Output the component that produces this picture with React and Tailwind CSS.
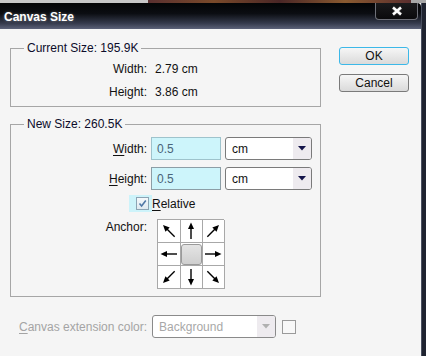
import React from 'react';

const font = { fontFamily: '"Liberation Sans", Arial, sans-serif' };

function Arrow({ angle }) {
  return (
    <svg width="22" height="22" viewBox="0 0 22 22">
      <g transform={`rotate(${angle} 11 11)`}>
        <line x1="11" y1="19" x2="11" y2="7" stroke="#000" strokeWidth="1.4" />
        <polygon points="11,2.5 8,9 14,9" fill="#000" />
      </g>
    </svg>
  );
}

function DropArrow({ color }) {
  return (
    <svg width="8" height="5" viewBox="0 0 8 5">
      <polygon points="0,0 8,0 4,4.5" fill={color} />
    </svg>
  );
}

function Select({ value, disabled, w }) {
  return (
    <div className={`${w} h-[23px] flex items-stretch rounded-[3px] border ${disabled ? 'border-[#8a8a8a]' : 'border-[#7a7a7a]'} bg-white overflow-hidden`}>
      <div className={`flex-1 flex items-center pl-[6px] ${disabled ? 'text-[#a8a8a8]' : 'text-[#111]'}`}>{value}</div>
      <div className="w-[18px] flex items-center justify-center bg-[#eeebef]">
        <DropArrow color={disabled ? '#b0b0b0' : '#14144a'} />
      </div>
    </div>
  );
}

export default function App() {
  const arrows = [-45, 0, 45, -90, null, 90, -135, 180, 135];

  return (
    <div className="w-[426px] h-[356px] overflow-hidden flex flex-col bg-[#f5f5f5] text-[12px] leading-[16px]" style={font}>
      <div className="h-[3px] flex">
        <div className="w-[148px] bg-[#c6c6c6]" />
        <div className="w-[263px] bg-[linear-gradient(to_right,#5a3030,#7a4a2a,#4a2626,#8a5a30,#5a2e2e)]" />
        <div className="flex-1 bg-[#a8a8a8]" />
      </div>
      <div className="flex flex-1">
        <div className="w-[421px] flex flex-col">
          <div className="h-[26px] flex items-start bg-[linear-gradient(to_bottom,#030405_0%,#0b0d12_40%,#353a4c_78%,#5c6279_100%)] rounded-tr-[4px]">
            <div className="pl-[4px] pt-[7px] text-white font-bold text-[12px] leading-[14px] [text-shadow:0_0_3px_rgba(255,255,255,0.35)]">Canvas Size</div>
            <div className="ml-auto mr-[3px] w-[43px] h-[17px] flex items-center justify-center rounded-b-[4px] border border-t-0 border-[#6e7078] bg-[linear-gradient(to_bottom,#1a1a1c,#0a0a0c)]">
              <svg width="12" height="10" viewBox="0 0 12 10">
                <path d="M2 1.5 L10 8.5 M10 1.5 L2 8.5" stroke="#3a3a3a" strokeWidth="4" />
                <path d="M2 1.5 L10 8.5 M10 1.5 L2 8.5" stroke="#fff" strokeWidth="2.4" />
              </svg>
            </div>
          </div>
          <div className="flex-1 flex flex-col">
            <div className="flex">
              <div className="pl-[10px] w-[321px] flex flex-col">
                <fieldset className="mt-[12px] border border-[#a6a6a6] pt-[6px] pb-[6px]">
                  <legend className="ml-[13px] px-[3px] leading-[14px] text-[#0c0c2a]">Current Size: 195.9K</legend>
                  <div className="grid grid-cols-[136px_auto] gap-x-[8px] gap-y-[7px] text-[#111]">
                    <div className="text-right">Width:</div>
                    <div>2.79 cm</div>
                    <div className="text-right">Height:</div>
                    <div>3.86 cm</div>
                  </div>
                </fieldset>
                <fieldset className="mt-[10px] border border-[#a6a6a6] pt-[6px] pb-[7px]">
                  <legend className="ml-[13px] px-[3px] leading-[14px] text-[#0c0c2a]">New Size: 260.5K</legend>
                  <div className="grid grid-cols-[136px_auto] gap-x-[4px] gap-y-[7px] items-center text-[#111]">
                    <div className="text-right"><u className="underline-offset-2">W</u>idth:</div>
                    <div className="flex gap-[4px]">
                      <div className="w-[70px] h-[23px] flex items-center pl-[5px] bg-[#cdf5fb] border border-[#9ec3cc] text-[#4a6478]">0.5</div>
                      <Select value="cm" w="w-[87px]" />
                    </div>
                    <div className="text-right"><u className="underline-offset-2">H</u>eight:</div>
                    <div className="flex gap-[4px]">
                      <div className="w-[70px] h-[23px] flex items-center pl-[5px] bg-[#cdf5fb] border border-[#8c9ea6] text-[#4a6478]">0.5</div>
                      <Select value="cm" w="w-[87px]" />
                    </div>
                  </div>
                  <div className="mt-[5px] pl-[118px] flex items-center h-[17px]">
                    <div className="w-[23px] h-[17px] bg-[#cdf3fa] flex items-center pl-[7px]">
                      <div className="w-[13px] h-[13px] border border-[#8ca4b4] bg-[linear-gradient(to_bottom,#f4f8fb,#dfe9f0)] flex items-center justify-center">
                        <svg width="9" height="9" viewBox="0 0 9 9">
                          <path d="M1.5 4.5 L3.6 7 L7.8 1.5" stroke="#5078a6" strokeWidth="1.6" fill="none" />
                        </svg>
                      </div>
                    </div>
                    <div className="text-[#111]"><u className="underline-offset-2">R</u>elative</div>
                  </div>
                  <div className="mt-[7px] flex items-start">
                    <div className="w-[136px] text-right text-[#111] pt-[-1px]">Anchor:</div>
                    <div className="ml-[10px] grid grid-cols-[repeat(3,22px)] border-l border-t border-[#a8a8a8] bg-white">
                      {arrows.map((a, i) => (
                        <div key={i} className="w-[23px] h-[23px] border-r border-b border-[#a8a8a8] flex items-center justify-center">
                          {a === null
                            ? <div className="w-[21px] h-[21px] rounded-[3px] border border-[#9a9a9a] bg-[linear-gradient(to_bottom,#e4e4e4,#cfcfcf)]" />
                            : <Arrow angle={a} />}
                        </div>
                      ))}
                    </div>
                  </div>
                </fieldset>
              </div>
              <div className="ml-[18px] mt-[18px] flex flex-col gap-[9px]">
                <button className="w-[70px] h-[18px] rounded-[3px] border border-[#3cb8e8] bg-[linear-gradient(to_bottom,#f6f6f6,#dadada)] text-[#111] leading-[14px]">OK</button>
                <button className="w-[70px] h-[18px] rounded-[3px] border border-[#7a7a7a] bg-[linear-gradient(to_bottom,#f6f6f6,#dadada)] text-[#111] leading-[14px]">Cancel</button>
              </div>
            </div>
            <div className="mt-[18px] pl-[19px] flex items-center">
              <div className="text-[#a4a4a4]"><u className="underline-offset-2">C</u>anvas extension color:</div>
              <div className="ml-[5px]"><Select value="Background" disabled w="w-[124px]" /></div>
              <div className="ml-[6px] w-[14px] h-[14px] border border-[#9a9a9a] bg-[#f8f8f8]" />
            </div>
          </div>
        </div>
        <div className="flex-1 bg-[#1f2330] border-l border-[#4a5060]" />
      </div>
    </div>
  );
}
